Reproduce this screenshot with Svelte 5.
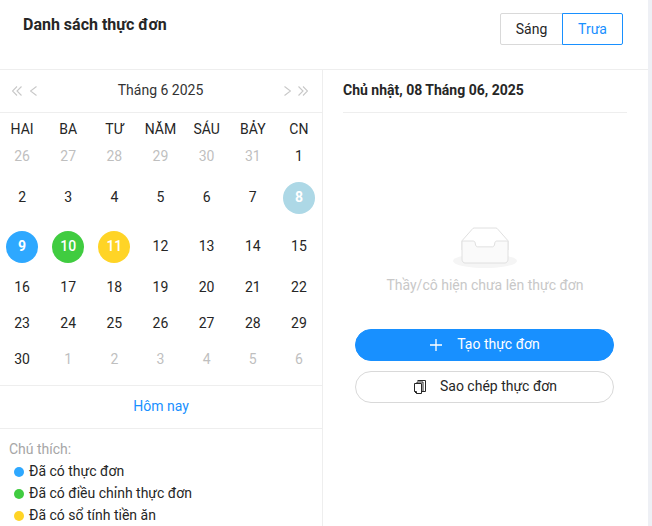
<script>
  const weekdays = ["HAI", "BA", "TƯ", "NĂM", "SÁU", "BẢY", "CN"];

  // state: muted = other month, the rest are coloured circles
  const rows = [
    { cls: "row-a", days: [[26, "muted"], [27, "muted"], [28, "muted"], [29, "muted"], [30, "muted"], [31, "muted"], [1]] },
    { cls: "row-b", days: [[2], [3], [4], [5], [6], [7], [8, "selected"]] },
    { cls: "row-c", days: [[9, "blue"], [10, "green"], [11, "yellow"], [12], [13], [14], [15]] },
    { cls: "row-d", days: [[16], [17], [18], [19], [20], [21], [22]] },
    { cls: "row-d", days: [[23], [24], [25], [26], [27], [28], [29]] },
    { cls: "row-a", days: [[30], [1, "muted"], [2, "muted"], [3, "muted"], [4, "muted"], [5, "muted"], [6, "muted"]] }
  ];

  const legend = [
    { color: "#2ea8ff", label: "Đã có thực đơn" },
    { color: "#40cc40", label: "Đã có điều chỉnh thực đơn" },
    { color: "#ffd426", label: "Đã có sổ tính tiền ăn" }
  ];
</script>

<div class="page">
  <main>
    <header>
      <h1>Danh sách thực đơn</h1>
      <div class="shift">
        <button class="shift-btn">Sáng</button>
        <button class="shift-btn active">Trưa</button>
      </div>
    </header>

    <div class="body">
      <section class="calendar">
        <div class="cal-head">
          <div class="arrows prev">
            <svg width="10" height="10" viewBox="0 0 10 10"><path d="M5 .5L.5 5 5 9.500M9.500 .5L5 5l4.500 4.500" /></svg>
            <svg width="7" height="10" viewBox="0 0 7 10"><path d="M6.500 .5L.5 5l6 4.500" /></svg>
          </div>
          <span class="month">Tháng 6 2025</span>
          <div class="arrows next">
            <svg width="7" height="10" viewBox="0 0 7 10"><path d="M.5 .5L6.500 5l-6 4.500" /></svg>
            <svg width="10" height="10" viewBox="0 0 10 10"><path d="M.5 .5L5 5 .5 9.500M5 .5L9.500 5 5 9.500" /></svg>
          </div>
        </div>

        <div class="week">
          {#each weekdays as day}
            <span>{day}</span>
          {/each}
        </div>

        <div class="days">
          {#each rows as row}
            <div class="row {row.cls}">
              {#each row.days as [num, state]}
                <div class="cell">
                  <span class="day {state ?? ''}">{num}</span>
                </div>
              {/each}
            </div>
          {/each}
        </div>

        <div class="today"><a href="#today">Hôm nay</a></div>

        <div class="legend">
          <p>Chú thích:</p>
          <ul>
            {#each legend as item}
              <li><i style="background: {item.color}"></i><span>{item.label}</span></li>
            {/each}
          </ul>
        </div>
      </section>

      <section class="detail">
        <h2>Chủ nhật, 08 Tháng 06, 2025</h2>

        <div class="empty">
          <svg width="64" height="41" viewBox="0 0 64 41">
            <g transform="translate(0 1)" fill="none" fill-rule="evenodd">
              <ellipse fill="#f5f5f5" cx="32" cy="33" rx="32" ry="7" />
              <g fill-rule="nonzero" stroke="#e0e0e0">
                <path d="M55 12.760L44.854 1.258C44.367.474 43.656 0 42.907 0H21.093c-.749 0-1.460.474-1.947 1.257L9 12.761V22h46v-9.240z" />
                <path d="M41.613 15.931c0-1.605.994-2.930 2.227-2.931H55v18.137C55 33.260 53.680 35 52.050 35h-40.100C10.320 35 9 33.259 9 31.137V13h11.160c1.233 0 2.227 1.323 2.227 2.928v.022c0 1.605 1.005 2.901 2.237 2.901h14.752c1.232 0 2.237-1.308 2.237-2.913v-.007z" fill="#fafafa" />
              </g>
            </g>
          </svg>
          <p>Thầy/cô hiện chưa lên thực đơn</p>
        </div>

        <div class="actions">
          <button class="pill primary">
            <svg width="14" height="14" viewBox="0 0 14 14"><path d="M7 1v12M1 7h12" /></svg>
            <span>Tạo thực đơn</span>
          </button>
          <button class="pill copy">
            <svg width="12" height="14" viewBox="0 0 12 14"><path d="M.5 3.500h7v10H2.500L.5 11.500zM2.500 13.500v-2H.5M3 3.500V2h6v9.500H7.500M3.500 .5h8V11.500H9" /></svg>
            <span>Sao chép thực đơn</span>
          </button>
        </div>
      </section>
    </div>
  </main>
</div>

<style>
  :global(body) {
    font-family: Roboto, "Liberation Sans", sans-serif;
    color: #262626;
  }

  .page {
    width: 652px;
    height: 526px;
    box-sizing: border-box;
    padding-right: 4px;
    background: #eef0f5;
    overflow: hidden;
  }

  main {
    height: 100%;
    background: #fff;
  }

  header {
    height: 70px;
    box-sizing: border-box;
    display: flex;
    justify-content: space-between;
    align-items: flex-start;
    padding: 13px 25px 0 23px;
    border-bottom: 1px solid #eeeeee;
  }

  h1 {
    margin: 2px 0 0;
    font-size: 16px;
    line-height: 19px;
    font-weight: 700;
  }

  .shift {
    display: flex;
  }

  .shift-btn {
    width: 63px;
    height: 32px;
    padding: 0;
    font: inherit;
    font-size: 14px;
    background: #fff;
    color: #262626;
    border: 1px solid #d9d9d9;
    border-radius: 2px 0 0 2px;
  }

  .shift-btn.active {
    width: 61px;
    margin-left: -1px;
    color: #1890ff;
    border-color: #1890ff;
    border-radius: 0 2px 2px 0;
  }

  .body {
    display: flex;
    height: 456px;
  }

  .calendar {
    width: 322px;
    flex: none;
    border-right: 1px solid #eeeeee;
  }

  .cal-head {
    height: 43px;
    box-sizing: border-box;
    display: flex;
    align-items: center;
    justify-content: space-between;
    padding: 0 14px 0 12px;
    border-bottom: 1px solid #eeeeee;
    font-size: 14px;
  }

  .arrows {
    display: flex;
    align-items: center;
  }

  .arrows.prev {
    gap: 8px;
  }

  .arrows.next {
    gap: 7px;
  }

  .arrows path {
    fill: none;
    stroke: #c8c8c8;
    stroke-width: 1.1;
  }

  .month {
    color: #333;
    margin-bottom: 2px;
  }

  .week,
  .row {
    display: grid;
    grid-template-columns: repeat(7, 1fr);
    width: 323px;
    margin-left: -1px;
    font-size: 14px;
  }

  .week {
    height: 33px;
    box-sizing: border-box;
    padding-bottom: 2px;
    align-items: center;
    text-align: center;
  }

  .days {
    padding-bottom: 8px;
    margin-top: -7px;
  }

  .row {
    box-sizing: border-box;
  }

  .row-a {
    height: 35px;
  }

  .row-b {
    height: 48px;
  }

  .row-c {
    height: 48px;
    padding-top: 2px;
  }

  .row-d {
    height: 36px;
  }

  .cell {
    display: flex;
    align-items: center;
    justify-content: center;
  }

  .day {
    width: 32px;
    height: 32px;
    box-sizing: border-box;
    padding-bottom: 2px;
    border-radius: 50%;
    display: flex;
    align-items: center;
    justify-content: center;
  }

  .muted {
    color: #bfbfbf;
  }

  .selected {
    background: #add8e6;
    color: #fff;
    font-weight: 700;
  }

  .blue {
    background: #2ea8ff;
    color: #fff;
    font-weight: 700;
  }

  .green {
    background: #40cc40;
    color: #fff;
    font-weight: 500;
  }

  .yellow {
    background: #ffd426;
    color: #fff;
    font-weight: 500;
  }

  .today {
    height: 42px;
    display: flex;
    align-items: center;
    justify-content: center;
    border-top: 1px solid #eeeeee;
    border-bottom: 1px solid #eeeeee;
    font-size: 14px;
  }

  .today a {
    color: #1890ff;
    text-decoration: none;
    margin-bottom: 2px;
  }

  .legend {
    padding: 10px 0 0 9px;
    font-size: 14px;
  }

  .legend p {
    margin: 0;
    line-height: 20px;
    color: #a6a6a6;
  }

  .legend ul {
    list-style: none;
    margin: 2px 0 0;
    padding: 0 0 0 5px;
  }

  .legend li {
    display: flex;
    align-items: center;
    height: 22px;
  }

  .legend li span {
    margin-bottom: 2px;
  }

  .legend i {
    width: 10px;
    height: 10px;
    border-radius: 50%;
    margin-right: 5px;
  }

  .detail {
    flex: 1;
    min-width: 0;
    padding: 0 21px 0 20px;
  }

  h2 {
    margin: 0;
    height: 43px;
    box-sizing: border-box;
    line-height: 40px;
    font-size: 14px;
    font-weight: 700;
    border-bottom: 1px solid #eeeeee;
  }

  .empty {
    margin-top: 114px;
    display: flex;
    flex-direction: column;
    align-items: center;
  }

  .empty p {
    margin: 7px 0 0;
    font-size: 14px;
    line-height: 20px;
    color: #c8c8c8;
  }

  .actions {
    margin: 34px 13px 0 12px;
    display: flex;
    flex-direction: column;
    gap: 10px;
  }

  .pill {
    height: 32px;
    display: flex;
    align-items: center;
    justify-content: center;
    gap: 14px;
    padding: 0;
    font: inherit;
    font-size: 14px;
    background: #fff;
    color: #262626;
    border: 1px solid #d9d9d9;
    border-radius: 16px;
  }

  .pill span {
    margin-bottom: 2px;
  }

  .pill path {
    fill: none;
    stroke: #262626;
    stroke-width: 1;
  }

  .pill.copy {
    padding-left: 2px;
  }

  .pill.primary {
    background: #1890ff;
    border-color: #1890ff;
    color: #fff;
  }

  .pill.primary path {
    stroke: #fff;
    stroke-width: 1.3;
  }
</style>
